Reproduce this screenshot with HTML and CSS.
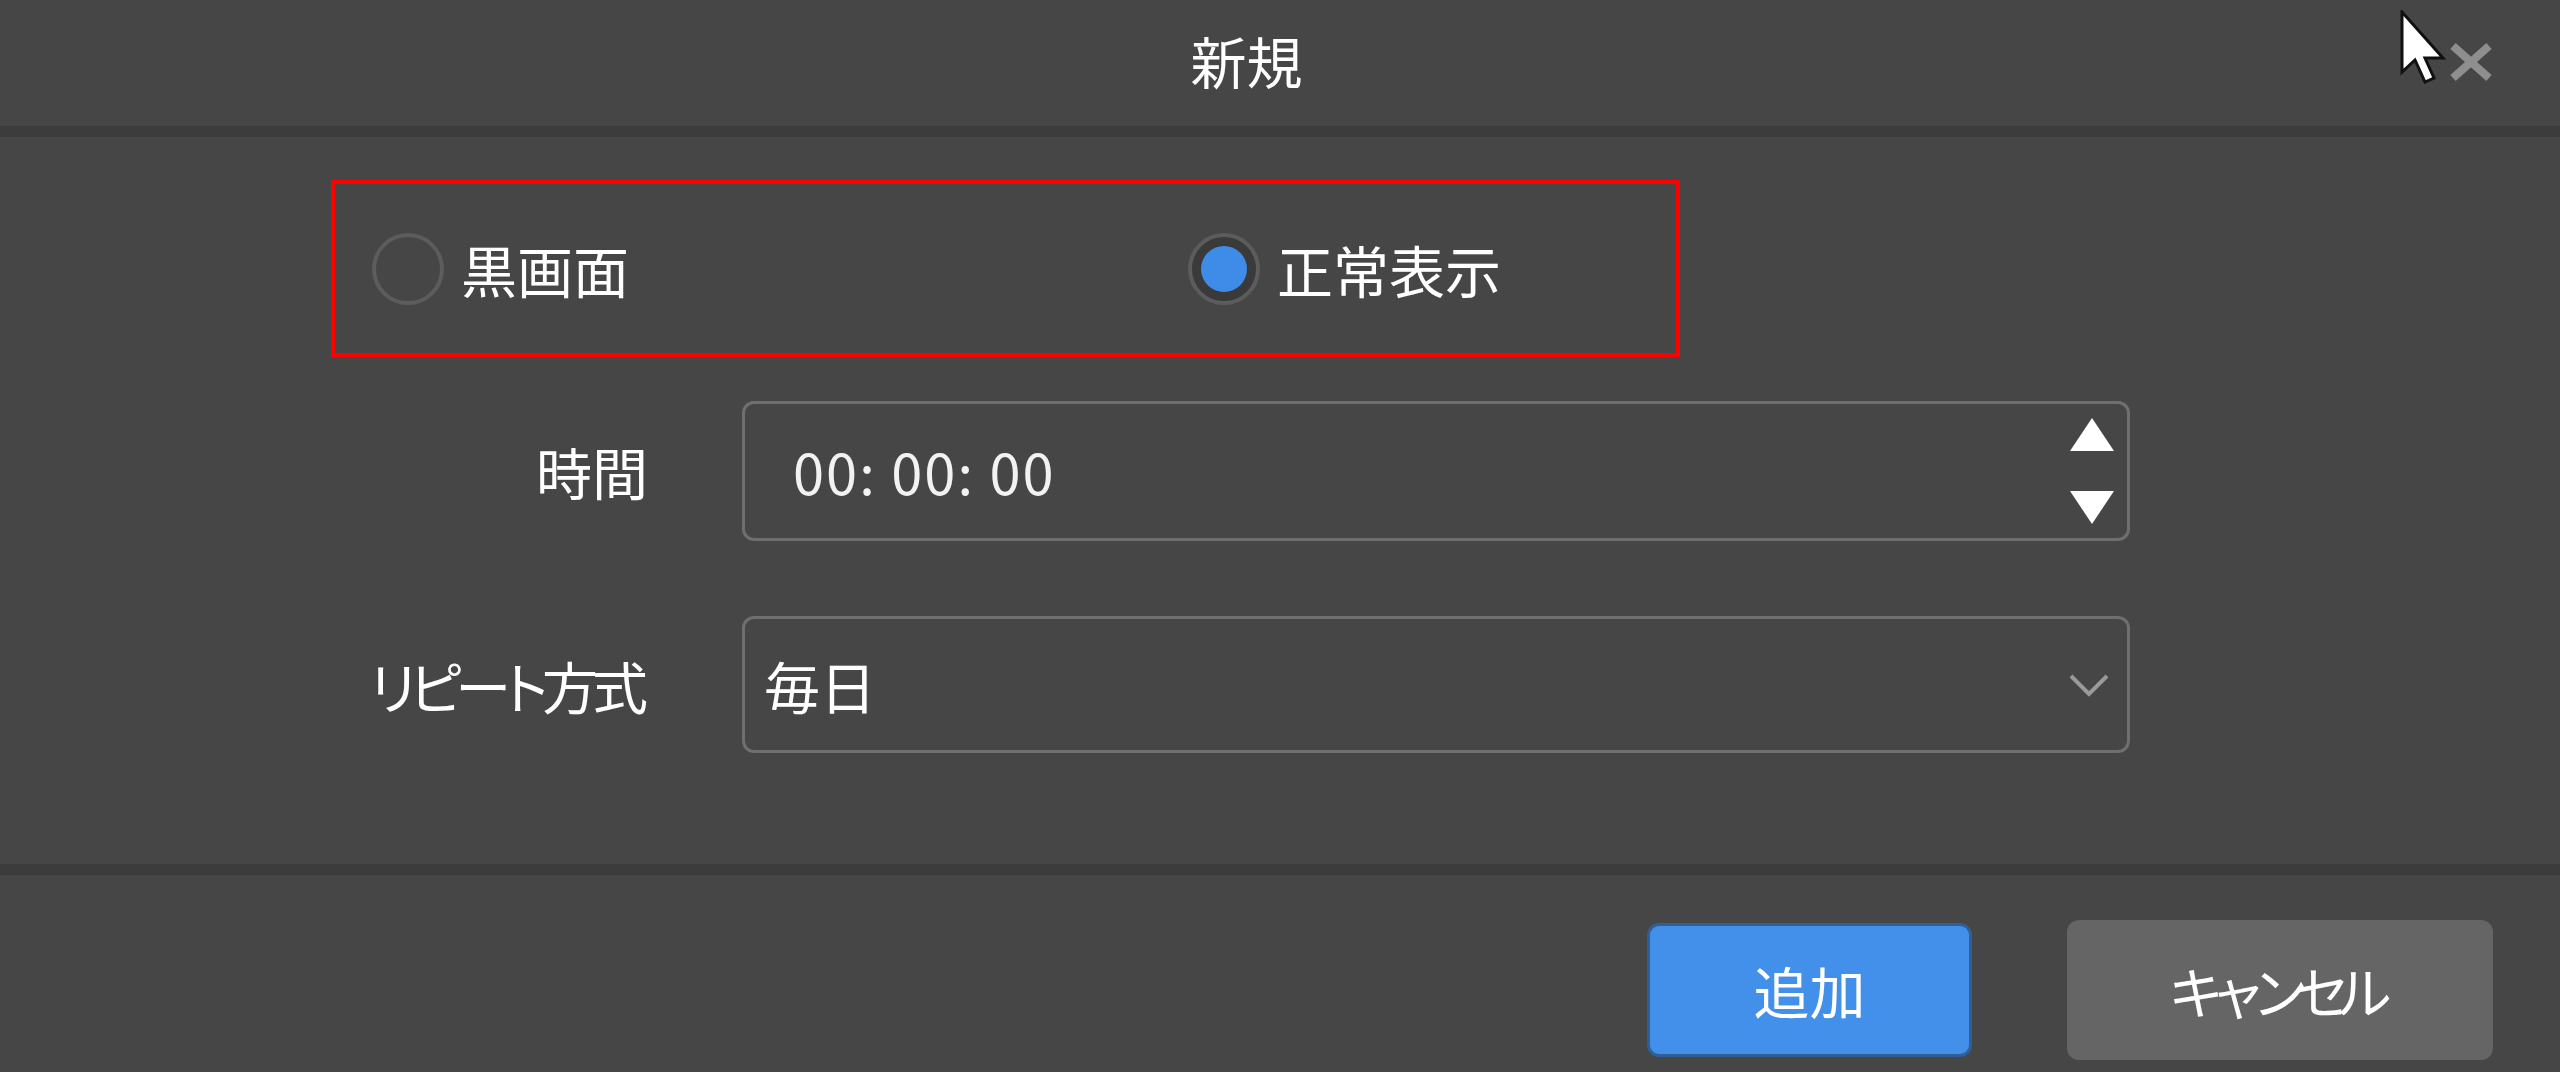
FILE: index.html
```html
<!DOCTYPE html>
<html lang="ja">

<head>
  <meta charset="UTF-8">
  <meta name="viewport" content="width=device-width, initial-scale=1.0">
  <title>新規</title>
  <link rel="stylesheet" href="styles.css">
</head>

<body>

  <div class="dialog">
    <div class="header">
      <span class="title">新規</span>
      <svg class="close" width="48" height="40" viewBox="0 0 48 40">
        <path d="M6 4 L42 36 M42 4 L6 36" stroke="#8e8e8e" stroke-width="8" fill="none" />
      </svg>
    </div>

    <div class="body">
      <div class="mode-box">
        <label class="radio">
          <span class="dot"></span>
          <span class="radio-text">黒画面</span>
        </label>
        <label class="radio checked">
          <span class="dot"></span>
          <span class="radio-text">正常表示</span>
        </label>
      </div>

      <div class="row row-time">
        <div class="row-label">時間</div>
        <div class="field field-time">
          <span class="time-value">00: 00: 00</span>
          <div class="spin">
            <svg width="44" height="33" viewBox="0 0 44 33">
              <polygon points="22,0 44,33 0,33" fill="#fff" />
            </svg>
            <svg width="44" height="33" viewBox="0 0 44 33">
              <polygon points="0,0 44,0 22,33" fill="#fff" />
            </svg>
          </div>
        </div>
      </div>

      <div class="row row-repeat">
        <div class="row-label kana">リピート方式</div>
        <div class="field field-select">
          <span class="select-value">毎日</span>
          <svg width="42" height="26" viewBox="0 0 42 26">
            <polyline points="3,4 21,22 39,4" stroke="#9a9a9a" stroke-width="4" fill="none" />
          </svg>
        </div>
      </div>
    </div>

    <div class="footer">
      <button class="btn btn-primary">追加</button>
      <button class="btn btn-cancel">キャンセル</button>
    </div>

    <!-- マウスカーソル -->
    <svg class="cursor" width="48" height="76" viewBox="0 0 48 76">
      <polygon points="2,2 2,62 15,50 25,72 34,68 25,48 43,48" fill="#fff" stroke="#111" stroke-width="3"
        stroke-linejoin="miter" />
    </svg>
  </div>

</body>

</html>
```

FILE: styles.css
```css
* {
  box-sizing: border-box;
}

body {
  margin: 0;
  background-color: #464646;
  color: #fff;
  font-family: "Noto Sans CJK JP", "Noto Sans", sans-serif;
  font-feature-settings: "palt";
}

.dialog {
  position: relative;
  width: 2560px;
  height: 1072px;
  display: flex;
  flex-direction: column;
  overflow: hidden;
}

/* ヘッダー */
.header {
  position: relative;
  height: 137px;
  border-bottom: 11px solid #3c3c3c;
  display: flex;
  align-items: center;
  justify-content: center;
  padding: 0 67px 6px 0;
}

.title {
  font-size: 56px;
  line-height: 1;
}

.close {
  position: absolute;
  right: 65px;
  top: 42px;
}

/* 本体 */
.body {
  height: 738px;
  border-bottom: 11px solid #3c3c3c;
  padding-top: 43px;
}

.mode-box {
  margin-left: 331px;
  width: 1349px;
  height: 177px;
  border: 4px solid #ff0000;
  padding-left: 37px;
  display: grid;
  grid-template-columns: 816px auto;
  align-items: center;
}

.radio {
  display: flex;
  align-items: center;
  gap: 17px;
  font-size: 56px;
  line-height: 1;
}

.dot {
  width: 72px;
  height: 72px;
  border-radius: 50%;
  border: 4px solid #5c5c5c;
  display: flex;
  align-items: center;
  justify-content: center;
}

.radio.checked .dot {
  background-color: #3a3a3a;
}

.radio.checked .dot::after {
  content: "";
  width: 46px;
  height: 46px;
  border-radius: 50%;
  background-color: #3f8be8;
}

.row {
  display: flex;
  align-items: center;
}

.row-time {
  margin-top: 44px;
}

.row-repeat {
  margin-top: 75px;
}

.row-label {
  width: 648px;
  margin-right: 94px;
  text-align: right;
  font-size: 56px;
  line-height: 1;
}

.row-label.kana {
  letter-spacing: -6px;
  padding-right: 6px;
}

.field {
  width: 1388px;
  border: 3px solid #6f6f6f;
  border-radius: 12px;
  display: flex;
  align-items: center;
  justify-content: space-between;
  font-size: 56px;
  line-height: 1;
}

.field-time {
  height: 140px;
  padding: 0 13px 0 48px;
}

.time-value {
  color: #f2f2f2;
  letter-spacing: 2px;
}

.spin {
  display: flex;
  flex-direction: column;
  gap: 40px;
}

.spin svg {
  display: block;
}

.field-select {
  height: 137px;
  padding: 0 17px 0 19px;
}

/* フッター */
.footer {
  flex: 1;
  display: flex;
  justify-content: flex-end;
  align-items: flex-start;
  gap: 95px;
  padding: 45px 67px 0 0;
}

.btn {
  border: none;
  border-radius: 12px;
  color: #fff;
  font-family: inherit;
  font-size: 56px;
  line-height: 1;
  padding: 0;
}

.btn-primary {
  width: 325px;
  height: 134px;
  margin-top: 3px;
  background-color: #4390ea;
  border: 3px solid #325f93;
}

.btn-cancel {
  width: 426px;
  height: 140px;
  background-color: #656565;
  letter-spacing: -14px;
  padding-right: 14px;
}

.cursor {
  position: absolute;
  left: 2400px;
  top: 10px;
}
```
